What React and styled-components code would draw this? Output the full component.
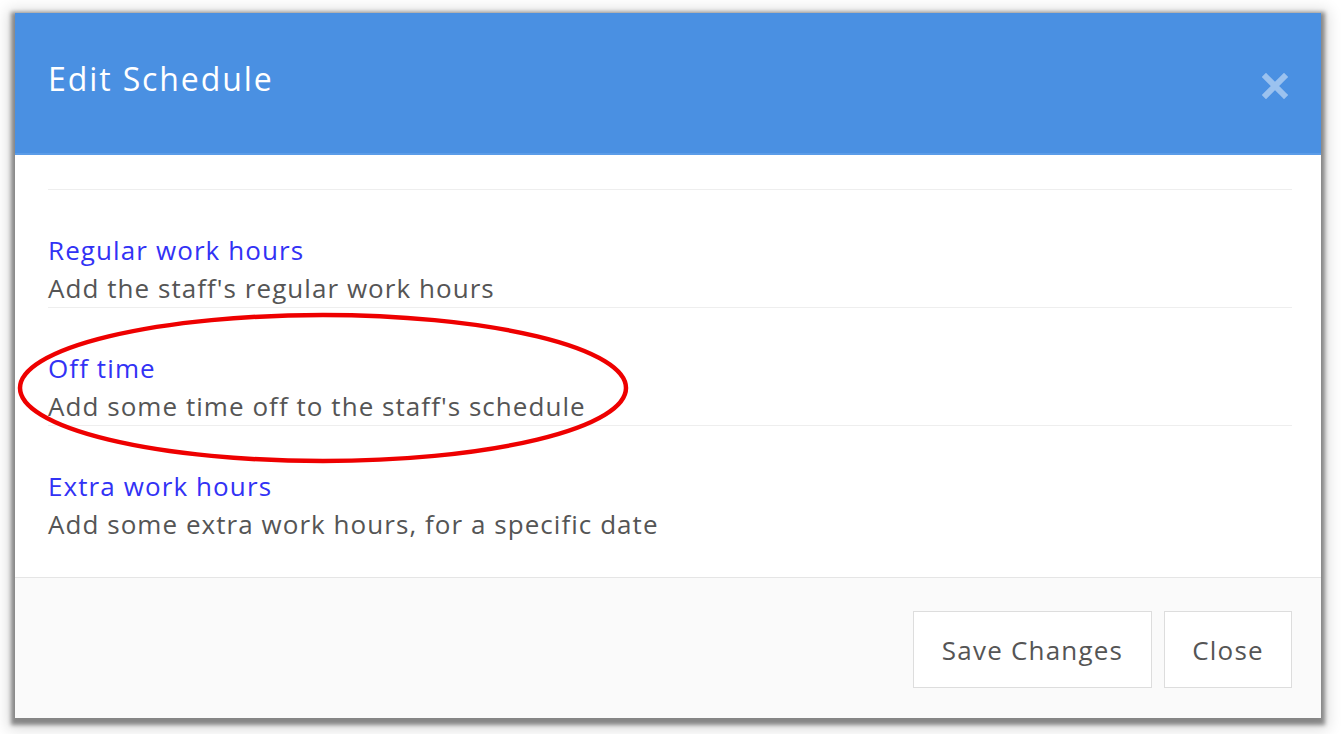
import React from "react";
import styled, { createGlobalStyle } from "styled-components";

const Global = createGlobalStyle`
  html, body { margin: 0; padding: 0; background: #ffffff; }
  body { font-family: "Open Sans", "Noto Sans", sans-serif; }
`;

const Page = styled.div`
  width: 1341px;
  height: 734px;
  padding: 13px 0 0 15px;
  box-sizing: border-box;
`;

const Modal = styled.div`
  position: relative;
  width: 1306px;
  height: 705px;
  display: flex;
  flex-direction: column;
  background: #fff;
  box-shadow: 0 3px 4px 4px rgba(0, 0, 0, 0.4), 0 4px 14px 7px rgba(0, 0, 0, 0.14);
`;

const Header = styled.div`
  height: 140px;
  flex: none;
  background: #4a90e2;
  border-bottom: 2px solid #5b9ce8;
  display: flex;
  align-items: center;
  justify-content: space-between;
  padding: 0 32px 0 33px;
  box-sizing: content-box;
`;

const Title = styled.h1`
  margin: 0;
  margin-top: -10px;
  font-family: "Open Sans", sans-serif;
  font-weight: 400;
  font-size: 32px;
  letter-spacing: 1.9px;
  color: #ffffff;
`;

const CloseX = styled.button`
  border: 0;
  background: none;
  padding: 0;
  margin-top: 6px;
  width: 28px;
  height: 28px;
  cursor: pointer;
  display: flex;
  align-items: center;
  justify-content: center;
`;

const Body = styled.div`
  flex: 1;
  padding: 34px 29px 0 33px;
`;

const TopRule = styled.div`
  border-top: 1px solid #eeeeee;
`;

const Item = styled.div`
  padding-top: 41px;
  border-bottom: ${(p) => (p.$last ? "0" : "1px solid #eeeeee")};
`;

const ItemTitle = styled.a`
  display: block;
  font-size: 26px;
  line-height: 38px;
  letter-spacing: 1.1px;
  color: #3232f5;
  text-decoration: none;
  cursor: pointer;
`;

const ItemDesc = styled.div`
  font-size: 26px;
  line-height: 38px;
  letter-spacing: 1.05px;
  color: #555555;
`;

const Footer = styled.div`
  height: 141px;
  flex: none;
  background: #fafafa;
  border-top: 1px solid #e5e5e5;
  display: flex;
  align-items: center;
  justify-content: flex-end;
  gap: 12px;
  padding: 3px 29px 0 0;
  box-sizing: border-box;
`;

const Button = styled.button`
  height: 77px;
  width: ${(p) => p.$w}px;
  padding: 0;
  background: #ffffff;
  border: 1px solid #dddddd;
  font-family: "Open Sans", sans-serif;
  font-size: 26px;
  letter-spacing: 1.2px;
  color: #555555;
  cursor: pointer;
`;

const Marker = styled.svg`
  position: absolute;
  left: 1px;
  top: 298px;
  pointer-events: none;
`;

const items = [
  { t: "Regular work hours", d: "Add the staff's regular work hours" },
  { t: "Off time", d: "Add some time off to the staff's schedule" },
  { t: "Extra work hours", d: "Add some extra work hours, for a specific date" },
];

export default function App() {
  return (
    <>
      <Global />
      <Page>
        <Modal>
          <Header>
            <Title>Edit Schedule</Title>
            <CloseX aria-label="close">
              <svg width="26" height="26" viewBox="0 0 26 26">
                <path
                  d="M4 4 L22 22 M22 4 L4 22"
                  stroke="rgba(255,255,255,0.45)"
                  strokeWidth="6"
                  strokeLinecap="square"
                />
              </svg>
            </CloseX>
          </Header>
          <Body>
            <TopRule />
            {items.map((it, i) => (
              <Item key={it.t} $last={i === items.length - 1}>
                <ItemTitle>{it.t}</ItemTitle>
                <ItemDesc>{it.d}</ItemDesc>
              </Item>
            ))}
          </Body>
          <Footer>
            <Button $w={239}>Save Changes</Button>
            <Button $w={128}>Close</Button>
          </Footer>
          <Marker width="614" height="154" viewBox="0 0 614 154">
            <ellipse cx="307" cy="77" rx="303" ry="73" fill="none" stroke="#ee0000" strokeWidth="4.5" />
          </Marker>
        </Modal>
      </Page>
    </>
  );
}
